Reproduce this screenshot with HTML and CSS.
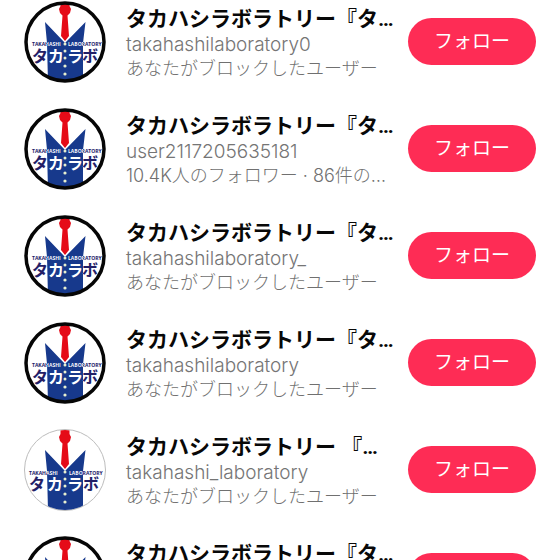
FILE: index.html
```
<!DOCTYPE html>
<html lang="ja">
<head>
<meta charset="utf-8">
<meta name="viewport" content="width=device-width, initial-scale=1">
<title>ユーザー</title>
<link rel="stylesheet" href="styles.css">
</head>
<body>
<svg class="defs" aria-hidden="true">
  <defs>
    <linearGradient id="ink" gradientUnits="userSpaceOnUse" x1="0" y1="0" x2="82" y2="0">
      <stop offset="0.285" stop-color="#221f66"/><stop offset="0.285" stop-color="#fff"/>
      <stop offset="0.725" stop-color="#fff"/><stop offset="0.725" stop-color="#221f66"/>
    </linearGradient>
    <clipPath id="disc"><circle cx="41" cy="41" r="40"/></clipPath>
    <symbol id="suit" viewBox="0 0 82 82">
      <path fill="#17398c" d="M21 21 41 42 61.500 21 59 42V82H24L23 42Z"/>
      <path fill="#e50b18" d="M36.500 0h9v5l1.500 3-1 4-2.500 2.500L45 35l-4 5-4-5 1.500-20.500L36 12l-1-4 1.500-3Z"/>
      <g fill="#e8f0cf"><circle cx="41" cy="43" r="1.500"/><circle cx="41" cy="50" r="1.500"/><circle cx="41" cy="57" r="1.500"/><circle cx="41" cy="65" r="1.600"/><circle cx="41" cy="73" r="1.600"/></g>
    </symbol>
    <symbol id="ringed" viewBox="0 0 82 82">
      <circle cx="41" cy="41" r="40" fill="#fff"/>
      <g clip-path="url(#disc)"><use href="#suit" width="82" height="82"/></g>
      <circle cx="41" cy="41" r="39" fill="none" stroke="#060606" stroke-width="3.500"/>
      <g fill="url(#ink)">
        <text class="tiny" x="8" y="45">TAKAHASHI</text><text class="tiny" x="44" y="45">LABORATORY</text>
        <text class="mark" x="8" y="61">タ</text><text class="mark" x="24" y="61">カ</text><text class="mark" x="43" y="61">ラ</text><text class="mark" x="58" y="61">ボ</text>
      </g>
    </symbol>
    <symbol id="plain" viewBox="0 0 82 82">
      <circle cx="41" cy="41" r="40.500" fill="#fff" stroke="#bdbdbd"/>
      <g clip-path="url(#disc)"><use href="#suit" width="82" height="82"/></g>
      <g fill="url(#ink)">
        <text class="tiny" x="5" y="46">TAKAHASHI</text><text class="tiny" x="45" y="46">LABORATORY</text>
        <text class="mark" x="5" y="61">タ</text><text class="mark" x="23" y="61">カ</text><text class="mark" x="43" y="61">ラ</text><text class="mark" x="59" y="61">ボ</text>
      </g>
    </symbol>
  </defs>
</svg>
<ul class="users">
  <li class="user">
    <svg class="avatar" aria-hidden="true"><use href="#ringed"/></svg>
    <div class="info"><h2 class="name">タカハシラボラトリー『タ…</h2><p class="handle">takahashilaboratory0</p><p class="note">あなたがブロックしたユーザー</p></div>
    <button class="follow" type="button">フォロー</button>
  </li>
  <li class="user">
    <svg class="avatar" aria-hidden="true"><use href="#ringed"/></svg>
    <div class="info"><h2 class="name">タカハシラボラトリー『タ…</h2><p class="handle">user2117205635181</p><p class="note">10.4K人のフォロワー · 86件の…</p></div>
    <button class="follow" type="button">フォロー</button>
  </li>
  <li class="user">
    <svg class="avatar" aria-hidden="true"><use href="#ringed"/></svg>
    <div class="info"><h2 class="name">タカハシラボラトリー『タ…</h2><p class="handle">takahashilaboratory_</p><p class="note">あなたがブロックしたユーザー</p></div>
    <button class="follow" type="button">フォロー</button>
  </li>
  <li class="user">
    <svg class="avatar" aria-hidden="true"><use href="#ringed"/></svg>
    <div class="info"><h2 class="name">タカハシラボラトリー『タ…</h2><p class="handle">takahashilaboratory</p><p class="note">あなたがブロックしたユーザー</p></div>
    <button class="follow" type="button">フォロー</button>
  </li>
  <li class="user">
    <svg class="avatar" aria-hidden="true"><use href="#plain"/></svg>
    <div class="info"><h2 class="name">タカハシラボラトリー 『…</h2><p class="handle">takahashi_laboratory</p><p class="note">あなたがブロックしたユーザー</p></div>
    <button class="follow" type="button">フォロー</button>
  </li>
  <li class="user">
    <svg class="avatar" aria-hidden="true"><use href="#ringed"/></svg>
    <div class="info"><h2 class="name">タカハシラボラトリー『タ…</h2></div>
    <button class="follow" type="button">フォロー</button>
  </li>
</ul>
</body>
</html>
```
FILE: styles.css
```
* { box-sizing: border-box; }
html { height: 100%; overflow: hidden; }
body {
  height: 100%;
  margin: 0;
  overflow: hidden;
  background: #fff;
  font-family: Inter, "Noto Sans CJK JP", sans-serif;
}
.defs { position: absolute; width: 0; height: 0; }
.users {
  display: grid;
  grid-template-columns: minmax(0, 1fr);
  gap: 25px;
  margin: 0;
  padding: 1px 24px 0;
  list-style: none;
}
.user { display: flex; align-items: flex-start; gap: 20px; }
.avatar { flex: none; width: 82px; height: 82px; }
.info { flex: 1; min-width: 0; padding-top: 4px; }
.name, .handle, .note { margin: 0; white-space: nowrap; }
.name {
  font: 700 21px/28px Roboto, "Noto Sans CJK JP", sans-serif;
  color: #080808;
}
.handle { font-size: 19px; line-height: 24px; font-weight: 300; color: #757575; }
.note { font-size: 18px; line-height: 23px; font-weight: 300; color: #707070; }
.follow {
  flex: none;
  width: 128px;
  height: 47px;
  margin-top: 17px;
  padding: 0;
  border: 0;
  border-radius: 24px;
  background: #fe2c55;
  color: #fff;
  font: 400 19px/24px Inter, "Noto Sans CJK JP", sans-serif;
}
.tiny { font: 700 5px "Open Sans", sans-serif; }
.mark { font: 700 16px "Noto Sans CJK JP", sans-serif; }
```
